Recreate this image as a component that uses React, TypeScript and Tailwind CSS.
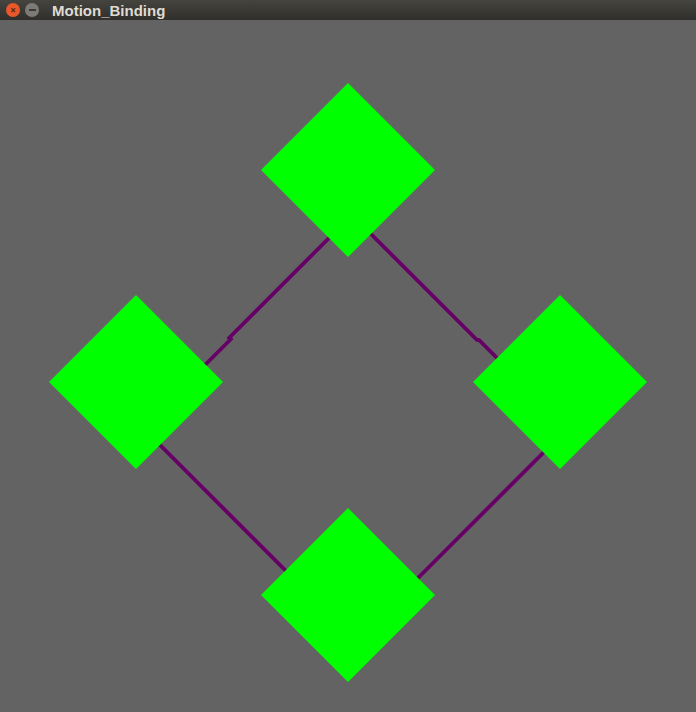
const GREEN = "#00ff00";
const PURPLE = "#660066";

// diamond centres in page coordinates (canvas starts under the 20px title bar)
const nodes = [
  { x: 348, y: 170 },
  { x: 136, y: 382 },
  { x: 560, y: 382 },
  { x: 348, y: 595 },
];
const R = 87;

// each binding is drawn as two segments with a small jog, like the original
const links: [number, number][][] = [
  [[351, 216], [228, 339], [232, 338], [181, 389]],
  [[360, 223], [477, 340], [479, 340], [522, 383]],
  [[150, 435], [300, 585]],
  [[556, 440], [400, 596]],
];

const TitleBar = () => (
  <div className="flex h-5 items-center bg-gradient-to-b from-[#45443f] to-[#302f2b] pl-[6px]">
    <div className="flex h-[14px] w-[14px] items-center justify-center rounded-full bg-[#e9582b] text-[10px] font-bold leading-none text-[#5c2210]">
      ×
    </div>
    <div className="ml-[5px] flex h-[14px] w-[14px] items-center justify-center rounded-full bg-[#7c7b76]">
      <div className="h-[2px] w-[7px] bg-[#3a3935]" />
    </div>
    <span className="ml-[13px] font-['Liberation_Sans',sans-serif] text-[15px] font-bold leading-none text-[#dfdbd2]">
      Motion_Binding
    </span>
  </div>
);

export default function App() {
  return (
    <div className="flex h-[712px] w-[696px] flex-col overflow-hidden bg-[#636363]">
      <TitleBar />
      <div className="flex-1">
        <svg width={696} height={692} viewBox="0 20 696 692" className="block">
          {links.map((pts, i) => (
            <polyline
              key={i}
              points={pts.map(p => p.join(",")).join(" ")}
              fill="none"
              stroke={PURPLE}
              strokeWidth={3.8}
              strokeLinejoin="bevel"
            />
          ))}
          {nodes.map((n, i) => (
            <polygon
              key={i}
              points={`${n.x},${n.y - R} ${n.x + R},${n.y} ${n.x},${n.y + R} ${n.x - R},${n.y}`}
              fill={GREEN}
            />
          ))}
        </svg>
      </div>
    </div>
  );
}
